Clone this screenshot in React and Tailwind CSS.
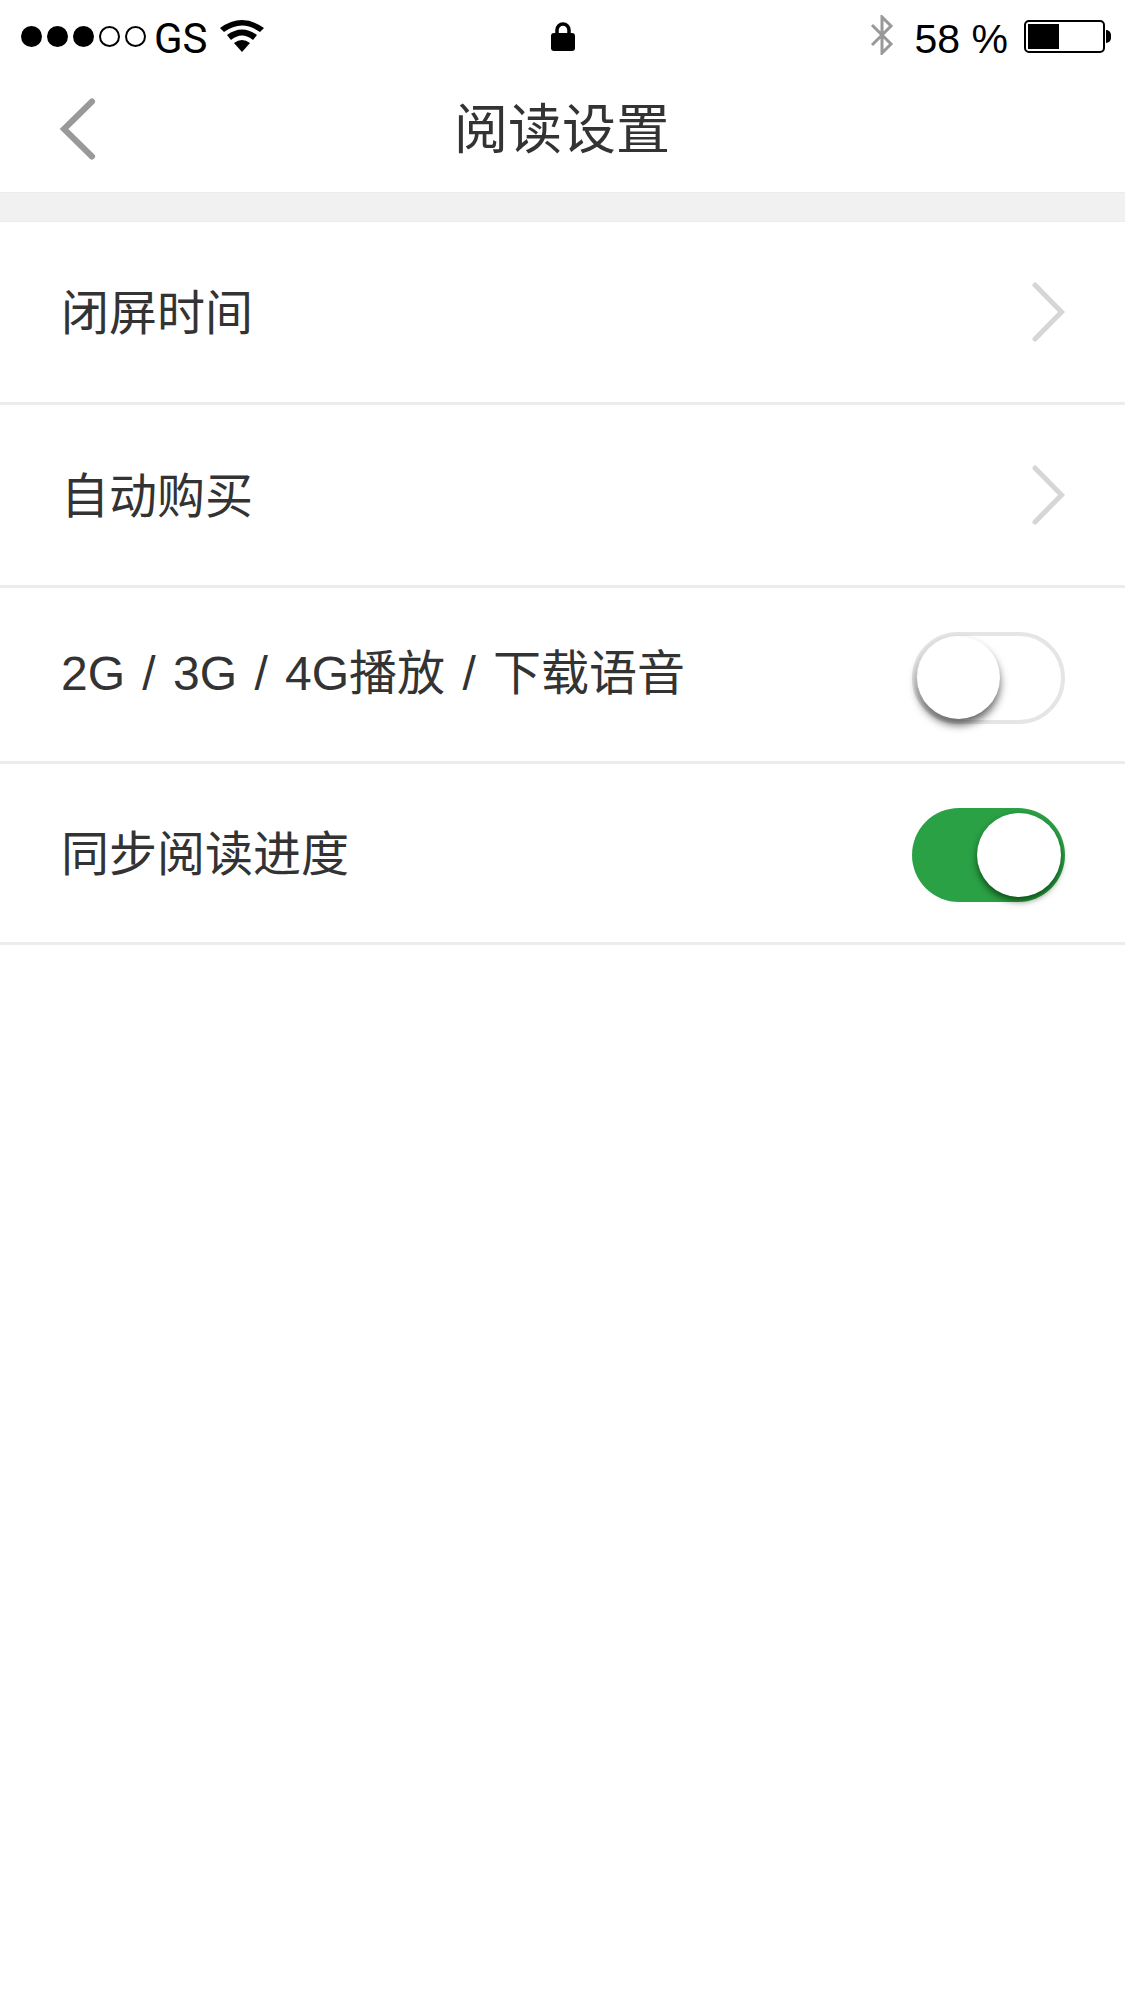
const cjk = { fontFamily: '"Liberation Sans","Noto Sans CJK SC",sans-serif' };
const robotoCjk = { fontFamily: 'Roboto,"Noto Sans CJK SC",sans-serif' };

function Chevron() {
  return (
    <svg width="33" height="60" viewBox="0 0 33 60" fill="none" className="shrink-0">
      <path d="M3 3 L29.5 30 L3 57" stroke="#d6d6d6" strokeWidth="5" strokeLinecap="round" strokeLinejoin="miter" />
    </svg>
  );
}

function Row({ h, label, textClass = "mt-[3px]", children }) {
  return (
    <div className={`flex items-center justify-between pl-[61px] pr-[60px] border-b-[3px] border-[#ececec] ${h}`}>
      <span className={`text-[48px] leading-none text-[#333333] whitespace-nowrap ${textClass}`} style={cjk}>{label}</span>
      {children}
    </div>
  );
}

export default function App() {
  return (
    <div className="w-[1125px] h-[2001px] bg-white overflow-hidden" style={cjk}>
      <div className="h-[72px] flex items-center px-[14px] text-black">
        <div className="flex-1 flex items-center">
          <div className="flex gap-[5px] items-center ml-[7px]">
            <span className="w-[21px] h-[21px] rounded-full bg-black" />
            <span className="w-[21px] h-[21px] rounded-full bg-black" />
            <span className="w-[21px] h-[21px] rounded-full bg-black" />
            <span className="w-[21px] h-[21px] rounded-full border-2 border-black" />
            <span className="w-[21px] h-[21px] rounded-full border-2 border-black" />
          </div>
          <span className="ml-[8px] text-[42px] leading-none mt-[6px]" style={robotoCjk}>GS</span>
          <svg width="46" height="34" viewBox="0 0 46 34" className="ml-[11px] -mt-[3px]">
            <path d="M1 10 Q23 -6 45 10 L41 14 Q23 1 5 14 Z" fill="#000" />
            <path d="M8 17 Q23 6 38 17 L34 22 Q23 13 12 22 Z" fill="#000" />
            <path d="M15 25 Q23 19 31 25 L23 34 Z" fill="#000" />
          </svg>
        </div>
        <svg width="26" height="30" viewBox="0 0 26 30" className="shrink-0">
          <path d="M7 14 V9 a6 6 0 0 1 12 0 V14" fill="none" stroke="#000" strokeWidth="3.5" />
          <rect x="1" y="12" width="24" height="18" rx="3" fill="#000" />
        </svg>
        <div className="flex-1 flex items-center justify-end">
          <svg width="24" height="40" viewBox="0 0 24 40" fill="none" className="-mt-[2px]">
            <path d="M2 10 L21 29 L12 38 V2 L21 11 L2 30" stroke="#999" strokeWidth="3" />
          </svg>
          <span className="ml-[21px] text-[41px] leading-none mt-[6px]">58 %</span>
          <div className="ml-[16px] flex items-center">
            <div className="w-[81px] h-[33px] border-2 border-black rounded-[5px] p-[2px]">
              <div className="w-[31px] h-full bg-black" />
            </div>
            <div className="w-[5px] h-[13px] bg-black rounded-r-full ml-[1px]" />
          </div>
        </div>
      </div>

      <div className="h-[120px] flex items-center relative justify-center">
        <svg width="38" height="62" viewBox="0 0 38 62" fill="none" className="absolute left-[59px] top-[26px]">
          <path d="M33 3.5 L5 31 L33 58.5" stroke="#999999" strokeWidth="6" strokeLinecap="round" />
        </svg>
        <span className="text-[54px] leading-none text-[#333333] -mt-[4px] -ml-[1px]">阅读设置</span>
      </div>

      <div className="h-[30px] bg-[#f1f1f1] border-t border-b border-[#ececec]" />

      <Row h="h-[183px]" label="闭屏时间"><Chevron /></Row>
      <Row h="h-[183px]" label="自动购买"><Chevron /></Row>
      <Row h="h-[176px]" textClass="-mt-[1px] [word-spacing:4px]" label="2G / 3G / 4G播放 / 下载语音">
        <div className="mt-[6px] w-[153px] h-[92px] rounded-full border-[4px] border-[#e5e5e5] bg-white flex items-center justify-start pl-[1px]">
          <div className="w-[83px] h-[83px] rounded-full bg-white shadow-[0_6px_8px_rgba(0,0,0,0.6)]" />
        </div>
      </Row>
      <Row h="h-[181px]" label="同步阅读进度">
        <div className="mt-[4px] w-[153px] h-[94px] rounded-full bg-[#2ba146] flex items-center justify-end pr-[4px]">
          <div className="w-[84px] h-[84px] rounded-full bg-white shadow-[0_4px_7px_rgba(0,40,0,0.7)]" />
        </div>
      </Row>
    </div>
  );
}
